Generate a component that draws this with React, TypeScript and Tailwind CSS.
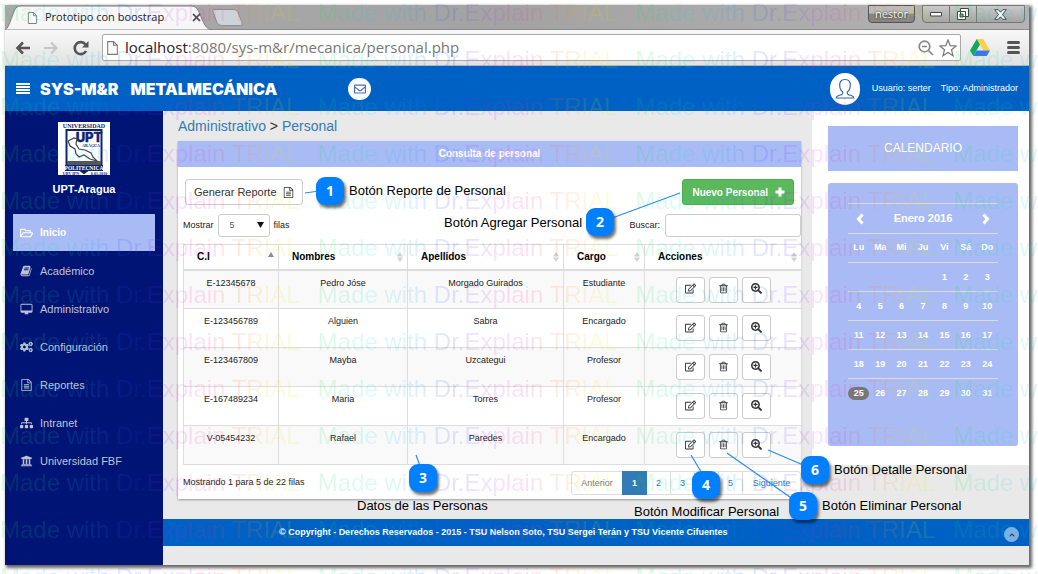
import type { ReactNode } from "react";
import {
  FaChevronUp,
  FaCogs,
  FaRegEdit,
  FaRegEnvelope,
  FaRegFolderOpen,
  FaSearchPlus,
  FaSitemap,
  FaUniversity,
} from "react-icons/fa";

function Glyph({ path, className = "h-[1em] w-[1em]" }: { path: string; className?: string }) {
  return (
    <svg viewBox="0 0 1792 1792" className={className} fill="currentColor" aria-hidden="true">
      <path d={path} />
    </svg>
  );
}

const bookPath =
  "M1639 478q40 57 18 129l-275 906q-19 64-76.500 107.500t-122.500 43.500h-923q-77 0-148.500-53.500t-99.500-131.500q-24-67-2-127 0-4 3-27t4-37q1-8-3-21.500t-3-19.500q2-11 8-21t16.500-23.500 16.500-23.500q23-38 45-91.500t30-91.500q3-10 .5-30t-.5-28q3-11 17-28t17-23q21-36 42-92t25-90q1-9-2.500-32t.5-28q4-13 22-30.500t22-22.500q19-26 42.500-84.500t27.500-96.500q1-8-3-25.500t-2-26.500q2-8 9-18t18-23 17-21q8-12 16.500-30.500t15-35 16-36 19.500-32 26.500-23.500 36-11.500 47.500 5.500l-1 3q38-9 51-9h761q74 0 114 56t18 130l-274 906q-36 119-71.500 153.500t-128.500 34.500h-869q-27 0-38 15-11 16-1 43 24 70 144 70h923q29 0 56-15.500t35-41.500l300-987q7-22 5-57 38 15 59 43zm-1064 2q-4 13 2 22.500t20 9.500h608q13 0 25.500-9.500t16.500-22.500l21-64q4-13-2-22.500t-20-9.500h-608q-13 0-25.500 9.500t-16.500 22.500zm-83 256q-4 13 2 22.500t20 9.500h608q13 0 25.500-9.500t16.500-22.500l21-64q4-13-2-22.500t-20-9.500h-608q-13 0-25.500 9.500t-16.500 22.500z";
const trashPath =
  "M704 736v576q0 14-9 23t-23 9h-64q-14 0-23-9t-9-23v-576q0-14 9-23t23-9h64q14 0 23 9t9 23zm256 0v576q0 14-9 23t-23 9h-64q-14 0-23-9t-9-23v-576q0-14 9-23t23-9h64q14 0 23 9t9 23zm256 0v576q0 14-9 23t-23 9h-64q-14 0-23-9t-9-23v-576q0-14 9-23t23-9h64q14 0 23 9t9 23zm128 724v-948h-896v948q0 22 7 40.500t14.500 27 10.500 8.500h832q3 0 10.500-8.500t14.500-27 7-40.500zm-672-1076h448l-48-117q-7-9-17-11h-317q-10 2-17 11zm928 32v64q0 14-9 23t-23 9h-96v948q0 83-47 143.500t-113 60.500h-832q-66 0-113-58.500t-47-141.500v-952h-96q-14 0-23-9t-9-23v-64q0-14 9-23t23-9h309l70-167q15-37 54-63t79-26h320q40 0 79 26t54 63l70 167h309q14 0 23 9t9 23z";
const filePath =
  "M1596 380q28 28 48 76t20 88v1152q0 40-28 68t-68 28h-1344q-40 0-68-28t-28-68v-1600q0-40 28-68t68-28h896q40 0 88 20t76 48zm-444-244v376h376q-10-29-22-41l-313-313q-12-12-41-22zm384 1528v-1024h-416q-40 0-68-28t-28-68v-416h-768v1536h1280zm-1024-864q0-14 9-23t23-9h704q14 0 23 9t9 23v64q0 14-9 23t-23 9h-704q-14 0-23-9t-9-23v-64zm736 224q14 0 23 9t9 23v64q0 14-9 23t-23 9h-704q-14 0-23-9t-9-23v-64q0-14 9-23t23-9h704zm0 256q14 0 23 9t9 23v64q0 14-9 23t-23 9h-704q-14 0-23-9t-9-23v-64q0-14 9-23t23-9h704z";
const screenPath =
  "M160 128h1472q66 0 113 47t47 113v992q0 66-47 113t-113 47h-512q0 60 40 120t40 72q0 30-34 32h-540q-34-2-34-32 0-12 40-72t40-120h-512q-66 0-113-47t-47-113v-992q0-66 47-113t113-47zm0 128q-32 0-32 32v832h1536v-832q0-32-32-32z";

const people = [
  ["E-12345678", "Pedro Jóse", "Morgado Guirados", "Estudiante"],
  ["E-123456789", "Alguien", "Sabra", "Encargado"],
  ["E-123467809", "Mayba", "Uzcategui", "Profesor"],
  ["E-167489234", "Maria", "Torres", "Profesor"],
  ["V-05454232", "Rafael", "Paredes", "Encargado"],
];

const columns = [
  { name: "C.I", width: "w-[95px]" },
  { name: "Nombres", width: "w-[129px]" },
  { name: "Apellidos", width: "w-[156px]" },
  { name: "Cargo", width: "w-[81px]" },
  { name: "Acciones", width: "w-[157px]" },
];

const menu = [
  { label: "Académico", icon: <Glyph path={bookPath} /> },
  { label: "Administrativo", icon: <Glyph path={screenPath} /> },
  { label: "Configuración", icon: <FaCogs /> },
  { label: "Reportes", icon: <Glyph path={filePath} /> },
  { label: "Intranet", icon: <FaSitemap /> },
  { label: "Universidad FBF", icon: <FaUniversity /> },
];

const weekdays = ["Lu", "Ma", "Mi", "Ju", "Vi", "Sá", "Do"];
const weeks = [
  [0, 0, 0, 0, 1, 2, 3],
  [4, 5, 6, 7, 8, 9, 10],
  [11, 12, 13, 14, 15, 16, 17],
  [18, 19, 20, 21, 22, 23, 24],
  [25, 26, 27, 28, 29, 30, 31],
];

function PageIcon({ className }: { className: string }) {
  return (
    <svg viewBox="0 0 12 15" className={className} fill="#fff" stroke="#777" aria-hidden="true">
      <path d="M1.500 1.500h5.500l3.500 3.500v8.500h-9z" />
      <path d="M7 1.500v3.500h3.500" fill="none" />
    </svg>
  );
}

function BrowserChrome() {
  return (
    <div className="font-['Open_Sans',sans-serif]">
      <div className="flex h-[24px] items-start justify-between bg-linear-to-r from-[#a9a9a9] via-[#a3a3a3] to-[#b4b4b4]">
        <div className="flex">
          <div className="relative h-[25px] w-[206px]">
            <svg viewBox="0 0 206 25" className="absolute inset-0 h-full w-full" aria-hidden="true">
              <path d="M0 25C5 23 8 4 12 2q1-1 4-1h171q4 0 6 4c4 8 6 18 13 20z" fill="#f7f7f7" stroke="#808080" />
            </svg>
            <div className="relative flex h-[25px] items-center pl-[22px] pr-[10px] text-[#222]">
              <PageIcon className="h-[14px] w-[11px]" />
              <span className="ml-[7px] flex-1 whitespace-nowrap text-[11px]">Prototipo con boostrap</span>
              <button type="button" aria-label="Cerrar pestaña">
                <svg viewBox="0 0 9 9" className="h-[9px] w-[9px]" stroke="#444" strokeWidth="1.700">
                  <path d="M1 1l7 7M8 1l-7 7" />
                </svg>
              </button>
            </div>
          </div>
          <button type="button" aria-label="Nueva pestaña" className="mt-[4px] h-[17px]">
            <svg viewBox="0 0 32 17" className="h-[17px] w-[32px]" fill="#ced3d9" stroke="#8b8e92">
              <path d="M3 .5h20q3 0 4 3l4 10q1 3-2 3H11q-4 0-5-3L2 3Q1 .5 3 .5z" />
            </svg>
          </button>
        </div>
        <div className="flex items-start gap-[7px] pr-[4px]">
          <button type="button" className="h-[18px] w-[47px] rounded-b border border-[#555] bg-linear-to-b from-[#bbb] from-45% to-[#858585] to-50% text-[11px] leading-[16px] text-white [text-shadow:0_0_2px_#000]">
            nestor
          </button>
          <div className="flex h-[18px] w-[103px] rounded-b border border-[#777] bg-linear-to-b from-[#c9c9c9] to-[#a5a5a5]">
            <button type="button" aria-label="Minimizar" className="flex flex-1 items-center justify-center border-r border-[#777]">
              <svg viewBox="0 0 14 6" className="h-[6px] w-[14px]" fill="#fff" stroke="#444">
                <path d="M1.500 1.500h11v3.500h-11z" />
              </svg>
            </button>
            <button type="button" aria-label="Restaurar" className="flex flex-1 items-center justify-center border-r border-[#777]">
              <svg viewBox="0 0 12 12" className="h-[12px] w-[12px]" fill="#fff" stroke="#444">
                <path d="M3.500.5h8v8h-8zM.5 3.500h8v8h-8z" />
                <path d="M3 6h3v3H3z" fill="#999" />
              </svg>
            </button>
            <button type="button" aria-label="Cerrar" className="flex w-[47px] items-center justify-center">
              <svg viewBox="0 0 13 11" className="h-[11px] w-[13px]" fill="#fff" stroke="#444">
                <path d="M.7.7h3.600l2.200 2.500L8.700.7h3.600L8.500 5.500l3.800 4.800H8.700L6.500 7.800l-2.200 2.500H.7l3.800-4.800z" />
              </svg>
            </button>
          </div>
        </div>
      </div>

      <div className="flex h-[37px] items-center border-b border-t border-b-[#b5b5b5] border-t-[#8a8a8a] bg-linear-to-b from-[#f8f8f8] to-[#e2e2e2] pl-[10px] pr-[9px]">
        <button type="button" aria-label="Atrás" className="w-[28px]">
          <svg viewBox="0 0 16 14" className="h-[14px] w-[16px]" fill="none" stroke="#555" strokeWidth="2.600">
            <path d="M15 7H2.500M8 1.500L2.500 7 8 12.500" />
          </svg>
        </button>
        <button type="button" aria-label="Adelante" className="w-[30px]">
          <svg viewBox="0 0 16 14" className="h-[14px] w-[16px]" fill="none" stroke="#c6c6c6" strokeWidth="2.200">
            <path d="M1 7h12.500M8 1.500L13.500 7 8 12.500" />
          </svg>
        </button>
        <button type="button" aria-label="Recargar" className="w-[29px]">
          <svg viewBox="0 0 16 16" className="h-[16px] w-[16px]" fill="none" stroke="#555" strokeWidth="2.600">
            <path d="M13 11a6 6 0 1 1-.5-6.500" />
            <path d="M15.500 1v6.500H9z" fill="#555" stroke="none" />
          </svg>
        </button>
        <div className="flex h-[27px] flex-1 items-center rounded-[2px] border border-[#a9a9a9] bg-white px-[3px]">
          <PageIcon className="h-[16px] w-[13px]" />
          <div className="ml-[6px] flex-1 whitespace-nowrap text-[15px] text-[#777]">
            <span className="text-[#222]">localhost</span>:8080/sys-m&amp;r/mecanica/personal.php
          </div>
          <svg viewBox="0 0 16 16" className="h-[16px] w-[16px]" fill="none" stroke="#888" strokeWidth="1.700" aria-hidden="true">
            <circle cx="6.500" cy="6.500" r="5.300" />
            <path d="M4 6.500h5M10.500 10.500l4.500 4.500" />
          </svg>
          <svg viewBox="0 0 18 18" className="ml-[5px] h-[18px] w-[18px]" fill="#fff" stroke="#777" strokeWidth="1.200" aria-hidden="true">
            <path d="M9 1l2.200 5.600 6 .4-4.700 3.800L14 16.700 9 13.400l-5 3.300 1.500-5.900L.8 7l6-.4z" />
          </svg>
        </div>
        <svg viewBox="0 0 20 17" className="ml-[9px] h-[17px] w-[20px]" aria-hidden="true">
          <path d="M6.700 0h6.500L20 11.500h-6.600z" fill="#ffcf48" />
          <path d="M6.700 0L0 11.500 3.300 17 10 5.600z" fill="#11a861" />
          <path d="M6.600 11.500H20L16.700 17H3.300z" fill="#3b78e7" />
        </svg>
        <button type="button" aria-label="Menú" className="ml-[17px] flex flex-col gap-[2px]">
          <span className="h-[3px] w-[13px] rounded-sm bg-[#555]" />
          <span className="h-[3px] w-[13px] rounded-sm bg-[#555]" />
          <span className="h-[3px] w-[13px] rounded-sm bg-[#555]" />
        </button>
      </div>
    </div>
  );
}

function Header() {
  return (
    <header className="flex h-[45px] items-center bg-[#0061c5] pl-[11px] pr-[11px] text-white">
      <button type="button" aria-label="Mostrar menú" className="flex flex-col gap-px">
        <span className="h-[2px] w-[14px] bg-white" />
        <span className="h-[2px] w-[14px] bg-white" />
        <span className="h-[2px] w-[14px] bg-white" />
        <span className="h-[2px] w-[14px] bg-white" />
      </button>
      <h1 className="ml-[10px] flex w-[308px] gap-[12px] whitespace-nowrap font-['Inter',sans-serif] text-[16px] font-black">
        <span>SYS-M&amp;R</span>
        <span>METALMECÁNICA</span>
      </h1>
      <button type="button" aria-label="Mensajes" className="flex h-[22px] w-[23px] items-center justify-center rounded-full bg-white text-[12px] text-[#4a6fb5]">
        <FaRegEnvelope />
      </button>
      <div className="ml-auto flex items-center text-[9px]">
        <span className="flex h-[32px] w-[30px] items-center justify-center rounded-full bg-white">
          <svg viewBox="0 0 20 22" className="h-[22px] w-[20px]" fill="none" stroke="#2f68b0" strokeWidth="1.200" aria-hidden="true">
            <path d="M10 1.500c4 0 5.500 2.500 5.300 6-.2 3-1.500 5.500-3 6.500-.5 3 1 2.500 4 3.500q2.500.8 2.500 2.500H1.200q0-1.700 2.500-2.500c3-1 4.500-.5 4-3.500-1.500-1-2.800-3.500-3-6.500-.2-3.500 1.300-6 5.300-6z" />
          </svg>
        </span>
        <span className="ml-[12px]">Usuario: serter</span>
        <span className="ml-[10px]">Tipo: Administrador</span>
      </div>
    </header>
  );
}

function Crest() {
  return (
    <svg viewBox="0 0 52 53" className="mx-auto h-[53px] w-[52px] bg-white" role="img" aria-label="Universidad Politécnica Territorial Aragua">
      <g fontFamily="'Liberation Serif', serif" fontWeight="700" textAnchor="middle" fill="#12246f">
        <text x="26" y="6" fontSize="6">UNIVERSIDAD</text>
        <path d="M8.500 8h35v35q-8 0-17.500 8-9.500-8-17.500-8z" fill="#fff" stroke="#12246f" strokeWidth="2" />
        <text x="31" y="20" fontSize="13" fontFamily="'Inter', sans-serif" fontWeight="800" stroke="#12246f" strokeWidth=".4">UPT</text>
        <text x="33" y="25" fontSize="4">ARAGUA</text>
        <path d="M10 19l6-3 3 1-1 5 3 5 6 1 6 3 2 4 4 4-7-2-6-4-5 2-3-3-1-5-5-3z" fill="#fff" stroke="#444" strokeWidth="1.200" />
        <path d="M9 39h34v4H9z" fill="#555" />
        <path d="M7 43h38v6H7z" fill="#12246f" />
        <text x="26" y="47.500" fontSize="5.500" fill="#fff">POLITECNICA</text>
        <text x="13" y="52.500" fontSize="4">UBV IPN</text>
        <text x="41" y="52.500" fontSize="4">8-01-2010</text>
        <path d="M23 48h6l-3 4z" />
      </g>
    </svg>
  );
}

function Sidebar() {
  return (
    <aside className="w-[158px] shrink-0 bg-[#001475] px-[8px] pt-[11px] text-center text-white">
      <Crest />
      <p className="mt-[6px] text-[11px] font-bold leading-[16px]">UPT-Aragua</p>
      <nav className="mt-[17px] text-left text-[11px] text-[#c0c3d2]">
        <a href="#inicio" className="flex h-[37px] items-center gap-[7px] bg-[#a9bbf5] pl-[7px] text-[10px] font-bold text-white">
          <FaRegFolderOpen className="h-[12px] w-[13px]" />
          Inicio
        </a>
        {menu.map((item) => (
          <a key={item.label} href="#menu" className="flex h-[38px] items-center gap-[7px] pl-[7px] pt-[2px] [&>svg]:h-[12px] [&>svg]:w-[13px]">
            {item.icon}
            {item.label}
          </a>
        ))}
      </nav>
    </aside>
  );
}

function IconButton({ label, children }: { label: string; children: ReactNode }) {
  return (
    <button type="button" aria-label={label} className="flex h-[26px] w-[29px] items-center justify-center rounded-[3px] border border-[#ccc] bg-white pb-[2px] text-[11px] text-[#333]">
      {children}
    </button>
  );
}

function SortMark({ active }: { active: boolean }) {
  return (
    <svg viewBox="0 0 6 10" className="h-[10px] w-[6px]" fill={active ? "#8080cc" : "#d2d2d2"} aria-hidden="true">
      {active ? <path d="M3 0l3 5H0z" /> : <path d="M3 0l3 4.500H0zM3 10L0 5.500h6z" />}
    </svg>
  );
}

function PeopleTable() {
  return (
    <table className="w-full table-fixed border-collapse border border-[#ddd] text-center text-[9px] text-[#222]">
      <thead>
        <tr className="h-[25px] border-b-2 border-[#ddd] text-[10px] text-black">
          {columns.map((column, index) => (
            <th key={column.name} className={`${column.width} border-x border-[#ddd] p-0 pl-[13px] pr-[4px]`}>
              <div className="flex items-center justify-between">
                {column.name}
                <SortMark active={index === 0} />
              </div>
            </th>
          ))}
        </tr>
      </thead>
      <tbody>
        {people.map((person) => (
          <tr key={person[0]} className="h-[39px] border-t border-[#ddd] align-top odd:bg-[#f9f9f9]">
            {person.map((value, index) => (
              <td key={index} className="border-x border-[#ddd] p-0 pt-[5px] leading-[14px]">
                {value}
              </td>
            ))}
            <td className="p-0 pt-[6px]">
              <div className="flex justify-center gap-[4px]">
                <IconButton label="Modificar">
                  <FaRegEdit />
                </IconButton>
                <IconButton label="Eliminar">
                  <Glyph path={trashPath} />
                </IconButton>
                <IconButton label="Detalle">
                  <FaSearchPlus />
                </IconButton>
              </div>
            </td>
          </tr>
        ))}
      </tbody>
    </table>
  );
}

function Pagination() {
  return (
    <nav aria-label="Páginas" className="flex h-[24px] items-stretch rounded-[3px] border border-[#ddd] bg-white text-[9px] leading-[22px] text-[#337ab7]">
      <button type="button" className="w-[50px] text-[#777]">Anterior</button>
      <button type="button" aria-current="page" className="-my-px w-[25px] bg-[#337ab7] font-bold text-white">1</button>
      {["2", "3", "4", "5"].map((page) => (
        <button key={page} type="button" className="w-[24px] border-r border-[#ddd]">
          {page}
        </button>
      ))}
      <button type="button" className="w-[57px]">Siguiente</button>
    </nav>
  );
}

function Personnel() {
  return (
    <main className="min-w-0 flex-1 pl-[15px] pr-[11px]">
      <p className="pt-[5px] text-[14px] leading-[20px] text-[#333]">
        <a href="#administrativo" className="text-[#337ab7]">Administrativo</a> &gt;{" "}
        <a href="#personal" className="text-[#337ab7]">Personal</a>
      </p>
      <section className="mt-[5px] bg-white shadow-[0_1px_2px_rgba(0,0,0,0.35)]">
        <h2 className="bg-[#a9bbf5] text-center text-[10px] font-bold leading-[26px] text-white">Consulta de personal</h2>
        <div className="flex justify-between pl-[7px] pr-[7px] pt-[12px]">
          <button type="button" className="flex h-[26px] items-center gap-[6px] rounded-[3px] border border-[#ccc] px-[8px] text-[11px] text-[#333]">
            Generar Reporte
            <Glyph path={filePath} className="h-[11px] w-[11px]" />
          </button>
          <button type="button" className="flex h-[26px] items-center gap-[7px] rounded-[3px] border border-[#4cae4c] bg-[#5cb85c] pl-[9px] pr-[8px] text-[10px] font-bold text-white">
            Nuevo Personal
            <svg viewBox="0 0 10 10" className="h-[10px] w-[10px]" stroke="currentColor" strokeWidth="3" aria-hidden="true">
              <path d="M5 .5v9M.5 5h9" />
            </svg>
          </button>
        </div>
        <div className="flex items-center justify-between pl-[5px] pt-[9px] text-[9px] text-[#222]">
          <label className="flex items-center gap-[4px]">
            Mostrar
            <span className="relative">
              <select defaultValue="5" className="h-[23px] w-[52px] appearance-none rounded-[3px] border border-[#ccc] bg-white pl-[11px] text-[9px] text-[#555]">
                <option>5</option>
                <option>10</option>
                <option>25</option>
              </select>
              <svg viewBox="0 0 7 6" className="pointer-events-none absolute right-[6px] top-[8px] h-[6px] w-[7px]" fill="#111" aria-hidden="true">
                <path d="M0 0h7L3.500 6z" />
              </svg>
            </span>
            filas
          </label>
          <label className="flex items-center gap-[5px]">
            Buscar:
            <input type="search" className="h-[23px] w-[136px] rounded-[3px] border border-[#ccc] bg-white px-[6px]" />
          </label>
        </div>
        <div className="pl-[5px] pt-[7px]">
          <PeopleTable />
        </div>
        <div className="flex items-start justify-between pb-[4px] pl-[5px] pt-[6px]">
          <p className="pt-[4px] text-[9px] leading-[14px] text-[#222]">Mostrando 1 para 5 de 22 filas</p>
          <Pagination />
        </div>
      </section>
    </main>
  );
}

function Chevron({ path }: { path: string }) {
  return (
    <svg viewBox="0 0 8 12" className="h-[12px] w-[8px]" fill="none" stroke="currentColor" strokeWidth="3" aria-hidden="true">
      <path d={path} />
    </svg>
  );
}

function Calendar() {
  return (
    <aside className="w-[217px] shrink-0 self-start bg-white pb-[19px] pl-[16px] pr-[11px] pt-[15px] text-white">
      <h2 className="bg-[#a9bbf5] text-center text-[12px] leading-[45px]">CALENDARIO</h2>
      <div className="mt-[12px] rounded-[3px] bg-[#a9bbf5] px-[20px] pb-[38px] pt-[20px] font-bold">
        <div className="flex h-[30px] items-center justify-between border-t border-[#dcdcdc] px-[8px] text-[11px]">
          <button type="button" aria-label="Mes anterior">
            <Chevron path="M6.500 1.500L2.500 6l4 4.500" />
          </button>
          Enero 2016
          <button type="button" aria-label="Mes siguiente">
            <Chevron path="M1.500 1.500L5.500 6l-4 4.500" />
          </button>
        </div>
        <table className="w-full table-fixed border-collapse text-center text-[9px]">
          <thead>
            <tr className="h-[29px] border-t border-[#dcdcdc]">
              {weekdays.map((day) => (
                <th key={day} className="p-0">{day}</th>
              ))}
            </tr>
          </thead>
          <tbody>
            {weeks.map((week, index) => (
              <tr key={index} className="h-[29px] border-t border-[#dcdcdc]">
                {week.map((day, position) => (
                  <td key={position} className="p-0">
                    {day > 0 && (
                      <span className={day === 25 ? "block rounded-full bg-[#777] leading-[13px]" : "block leading-[13px]"}>{day}</span>
                    )}
                  </td>
                ))}
              </tr>
            ))}
          </tbody>
        </table>
      </div>
    </aside>
  );
}

function Trial() {
  return (
    <div aria-hidden="true" className="pointer-events-none absolute inset-0 select-none overflow-hidden opacity-13">
      <div className="-mt-[11px]">
        {Array.from({ length: 13 }, (_, row) => (
          <div key={row} className="flex h-[47px] whitespace-pre text-[24px] leading-[47px]">
            {Array.from({ length: 4 }, (_, column) => (
              <span
                key={column}
                className="-mr-px shrink-0 bg-[linear-gradient(90deg,#00e040_0%,#00e0d0_17%,#00a0ff_30%,#3030ff_42%,#d020ff_56%,#ff2090_66%,#ff7030_76%,#ffe000_87%,#80ff00_95%,#00e040_100%)] bg-clip-text text-transparent"
              >
                {"Made with Dr.Explain TRIAL   "}
              </span>
            ))}
          </div>
        ))}
      </div>
    </div>
  );
}

const callouts = [
  { number: 1, badge: "left-[316px] top-[177px]", text: "left-[349px] top-[183px]", label: "Botón Reporte de Personal" },
  { number: 2, badge: "left-[586px] top-[208px]", text: "left-[444px] top-[215px]", label: "Botón Agregar Personal" },
  { number: 3, badge: "left-[409px] top-[464px]", text: "left-[357px] top-[498px]", label: "Datos de las Personas" },
  { number: 4, badge: "left-[692px] top-[471px]", text: "left-[634px] top-[504px]", label: "Botón Modificar Personal" },
  { number: 5, badge: "left-[789px] top-[492px]", text: "left-[822px] top-[498px]", label: "Botón Eliminar Personal" },
  { number: 6, badge: "left-[801px] top-[456px]", text: "left-[834px] top-[462px]", label: "Botón Detalle Personal" },
];

function Callouts() {
  return (
    <div className="pointer-events-none absolute left-0 top-0">
      <svg viewBox="0 0 1038 574" className="h-[574px] w-[1038px] max-w-none" stroke="#2a8cf0" strokeWidth="1.200" aria-hidden="true">
        <path d="M305 193l14-2M604 221l76-28M416 455l6 16M691 455l12 20M727 453l70 49M768 450l40 17" />
      </svg>
      {callouts.map((item) => (
        <div key={item.number}>
          <span className={`absolute ${item.badge} h-[28px] w-[28px] rounded-[9px] bg-[#0080ff] text-center font-['Open_Sans',sans-serif] text-[14px] font-bold leading-[28px] text-white shadow-[2px_3px_3px_rgba(0,0,0,0.55)]`}>
            {item.number}
          </span>
          <span className={`absolute ${item.text} whitespace-nowrap text-[13px] leading-[16px] text-black`}>{item.label}</span>
        </div>
      ))}
    </div>
  );
}

export default function App() {
  return (
    <div className="relative min-h-screen overflow-hidden bg-white pb-[9px] pl-[5px] pr-[9px] pt-[5px] font-['Liberation_Sans',Arial,sans-serif]">
      <div className="bg-[#e9e9e9] shadow-[2px_2px_3px_1px_rgba(0,0,0,0.6)]">
        <BrowserChrome />
        <Header />
        <div className="flex">
          <Sidebar />
          <div className="min-w-0 flex-1 pb-[19px]">
            <div className="flex pb-[20px]">
              <Personnel />
              <Calendar />
            </div>
            <footer className="flex h-[27px] items-center bg-[#0061c5] pl-[116px] pr-[10px] text-[9px] font-bold text-white">
              <p className="flex-1">© Copyright - Derechos Reservados - 2015 - TSU Nelson Soto, TSU Sergei Terán y TSU Vicente Cifuentes</p>
              <button type="button" aria-label="Volver arriba" className="mt-[4px] flex h-[15px] w-[15px] items-center justify-center rounded-full bg-[#7cb0e5] text-[6px] text-[#234]">
                <FaChevronUp />
              </button>
            </footer>
          </div>
        </div>
      </div>
      <Trial />
      <Callouts />
    </div>
  );
}
